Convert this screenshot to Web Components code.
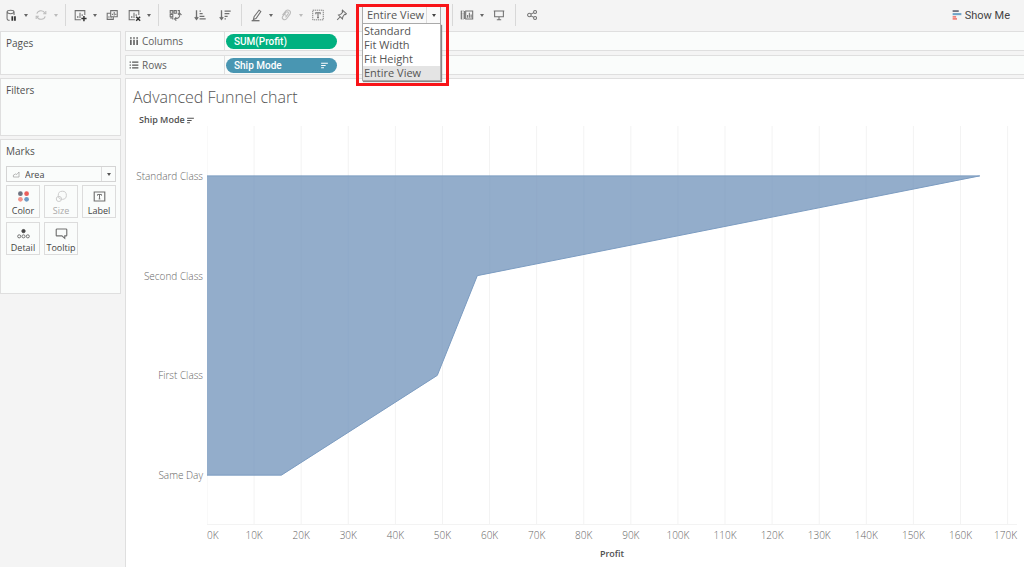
<!DOCTYPE html>
<html lang="en">
<head>
<meta charset="utf-8">
<meta name="viewport" content="width=device-width, initial-scale=1">
<title>Advanced Funnel chart</title>
<style>
  html, body { margin: 0; height: 100%; }
  body { background: #f4f4f4; color: #555; font-family: "Open Sans", "Noto Sans", sans-serif; font-size: 11px; }
</style>
</head>
<body>
<funnel-workbook></funnel-workbook>

<script>
const ICONS = {
  data: '<path d="M6.5 14H5Q3.5 13.500 3.500 12V4.500Q3.500 2.500 7.500 2.500T11.500 4.500V8M3.500 4.500Q4 6.500 7.500 6.500T11.500 4.500"/><path d="M9.500 9.500v5M12.500 9.500v5" stroke="#333" stroke-width="2"/>',
  refresh: '<path d="M3.200 6.500A5 5 0 0 1 12.500 6M12.800 9.500A5 5 0 0 1 3.500 10"/><path d="M10.500 6.500h3V3.500M5.500 9.500h-3v3"/>',
  sheet: '<path d="M13.500 8V3H2.500v10.500H9M5.500 11.500V9M8 11.500V5.500M10.500 9V7"/><path d="M12.500 9v6M9.500 12h6" stroke="#333" stroke-width="1.700"/>',
  duplicate: '<path d="M6.500 3h7.500v7H6.500zM6 6H2.500v7h7v-2.500M8.500 8V6.500M10.500 8.500V4.500M12.300 8V6.500M4.500 11V9.500M6.500 11.200h1"/>',
  clear: '<path d="M13.500 8V3H2.500v10.500H9M5.500 11.500V9M8 11.500V5.500M10.500 9V7"/><path d="M10.500 10l4.500 4.500M15 10l-4.500 4.500" stroke="#333" stroke-width="1.700"/>',
  swap: '<path d="M2.500 3h3v3h-3zM7 3h2.500v3H7zM11 3h2v3h-2M2.500 7.500h3V10h-3zM2.500 11.500h3v1.500M13.500 6.500Q14 12.500 7.500 12.500M11.500 8l2-2 2 2M9.500 10.500l-2 2 2 2"/>',
  ascending: '<path d="M4 2.500V13M2 10.500l2 2.500 2-2.500M7.500 3.500H9M7.500 6.500H11M7.500 9.500H13M7.500 12.500H14.500" stroke-width="1.500"/>',
  descending: '<path d="M4 2.500V13M2 10.500l2 2.500 2-2.500M7.500 3.500H14.500M7.500 6.500H13M7.500 9.500H11M7.500 12.500H9" stroke-width="1.500"/>',
  highlight: '<path d="M11.500 2.500l2 1.500-5.500 8-3 1.200.8-3.200z"/><path d="M3 14.500h9" stroke-width="1.500"/>',
  clip: '<path d="M4 8l4-5q2-1.500 4 0t.5 4l-4 5.500q-1.800 1.800-3.700.4T4.300 9.500L8 4.800q1.200-1 2.200-.2t.3 2L7.500 10.700M6 7l2 1.500"/>',
  text: '<path d="M2 2.500h12v11h-12z" stroke-dasharray="1.500 .8" stroke-width="1"/><path d="M5.500 7V5.500h5V7M8 5.500V11M7 11h2"/>',
  pin: '<path d="M8.500 2.500l4.500 4-1 1-1-.3L9 10l-.5 2.500L4 8l2.500-.7 2.300-2.500-.6-1.300zM6 10l-3.500 3.500"/>',
  cards: '<path d="M6.500 3.500h8v9h-8zM8.700 11V8M10.700 11V5.500M12.700 11V7.500"/><path d="M1 3.500h4M1 6h4M1 8h4M1 10.200h4M1 12.500h4" stroke-dasharray="1 1"/><path d="M1.500 3.500v9M5 3.500v9"/>',
  present: '<path d="M2 3.500h12M3 3.500v6.500h10V3.500M8 10v3M5.500 13.500h5"/>',
  share: '<circle cx="5" cy="8" r="2"/><circle cx="11.500" cy="4.500" r="1.700"/><circle cx="11.500" cy="11.500" r="1.700"/><path d="M6.800 7L10 5.300M6.800 9L10 10.700"/>',
  showme: '<path d="M3 3.500h7" stroke="#6b6b78" stroke-width="2"/><path d="M3 7h10" stroke="#6fa3c7" stroke-width="2.400"/><path d="M3 10h4M3 12.500h5" stroke="#f0837c" stroke-width="2"/>',
  columns: '<path d="M3 2v2.500M8 2v2.500M13 2v2.500M3 6v8.500M8 6v8.500M13 6v8.500" stroke="#555" stroke-width="2.400"/>',
  rows: '<path d="M1 3.500h2M5 3.500h10M1 8h2M5 8h10M1 12.500h2M5 12.500h10" stroke="#555" stroke-width="2"/>',
  sort: '<path d="M2 4h12M2 8h8M2 12h5" stroke="currentColor" stroke-width="2"/>',
  area: '<path d="M2.500 12.500V9l4-2 2 1 4-4.500v9z"/>',
  color: '<g stroke="none"><circle cx="4.200" cy="4.500" r="2.900" fill="#6d7280"/><circle cx="11.800" cy="4.500" r="2.900" fill="#ea5f5c"/><circle cx="4.200" cy="11.500" r="2.900" fill="#f3938a"/><circle cx="11.800" cy="11.500" r="2.900" fill="#6f9bc4"/></g>',
  size: '<circle cx="9" cy="6.500" r="5"/><circle cx="4.800" cy="11" r="3.200"/>',
  label: '<path d="M1.500 2.500h13v11h-13z" stroke-width="1.400"/><path d="M5.500 7V5.500h5V7M8 5.500V11M7 11h2"/>',
  detail: '<circle cx="8" cy="5" r="2" fill="#444" stroke="#444"/><circle cx="2.700" cy="11.500" r="1.900"/><circle cx="8" cy="11.500" r="1.900"/><circle cx="13.300" cy="11.500" r="1.900"/>',
  tooltip: '<path d="M2.500 2.500h11q1 0 1 1v6.500q0 1-1 1H12v3l-3.500-3h-6q-1 0-1-1V3.500q0-1 1-1z" stroke-width="1.400"/>'
};

class Base extends HTMLElement {
  connectedCallback() {
    if (this.shadowRoot) return;
    this.attachShadow({ mode: "open" }).innerHTML =
      "<style>*{box-sizing:border-box}" + this.css() + "</style>" + this.html();
  }
}

customElements.define("ui-icon", class extends Base {
  css() { return `:host{display:block;flex:none;width:var(--icon,14px);height:var(--icon,14px)}
    svg{display:block;width:100%;height:100%;fill:none;stroke:var(--ink,#707070);stroke-width:1.200}`; }
  html() { return `<svg viewBox="0 0 16 16" aria-hidden="true">${ICONS[this.getAttribute("name")]}</svg>`; }
});

customElements.define("tool-button", class extends Base {
  css() { return `:host{display:flex;align-items:center}
    :host([faded]){--ink:#bbb}
    button{border:0;background:none;padding:0;height:24px;display:flex;align-items:center;justify-content:center}
    .main{width:24px}
    :host([menu]) .main{width:20px}
    .more{width:10px}
    .more::before{content:"";border:2px solid transparent;border-top:3px solid var(--ink,#666);border-bottom:0}`; }
  html() {
    const label = this.getAttribute("label");
    return `<button class="main" type="button" aria-label="${label}"><ui-icon name="${this.getAttribute("icon")}"></ui-icon></button>` +
      (this.hasAttribute("menu") ? `<button class="more" type="button" aria-label="${label} options"></button>` : "");
  }
});

customElements.define("fit-picker", class extends Base {
  css() { return `:host{display:block;position:relative;margin-left:8px;width:79px;font-size:11px;color:#555}
    .field{position:relative;display:block}
    select{appearance:none;display:block;width:100%;height:18px;border:1px solid #aaa;background:#fafafa;font:inherit;color:inherit;padding:0 0 1px 4px;border-radius:0}
    .field::before{content:"";position:absolute;right:14px;top:1px;bottom:1px;border-left:1px solid #ddd}
    .field::after{content:"";position:absolute;right:5px;top:8px;border:2px solid transparent;border-top:3px solid #444;border-bottom:0}
    ul{position:absolute;z-index:2;top:18px;left:0;width:100%;margin:0;padding:0;list-style:none;background:#fff;border:1px solid #aaa;border-top:0;box-shadow:1px 1px 1px #888}
    li{line-height:14px;padding-left:1px}
    li[aria-selected=true]{background:#e4e4e4}
    .frame{position:absolute;z-index:3;left:-6px;top:-2px;width:93px;height:82px;border:3px solid #f81418;pointer-events:none}`; }
  html() {
    const items = ["Standard", "Fit Width", "Fit Height", "Entire View"];
    return `<label class="field"><select aria-label="Fit">${items.map(t => `<option${t === "Entire View" ? " selected" : ""}>${t}</option>`).join("")}</select></label>
      <ul role="listbox" aria-label="Fit">${items.map(t => `<li role="option" aria-selected="${t === "Entire View"}">${t}</li>`).join("")}</ul>
      <div class="frame"></div>`;
  }
});

customElements.define("app-toolbar", class extends Base {
  css() { return `:host{display:flex;align-items:center;height:30px;padding-left:1px}
    .group{display:flex}
    .sorts{gap:1px}
    hr{width:1px;height:22px;border:0;margin:0 4px;background:#d8d8d8}
    .after{margin-left:11px}
    .show{margin-left:auto;margin-right:14px;border:0;padding:0;background:none;display:flex;align-items:center;font:11px Roboto,sans-serif;color:#444;gap:1px}`; }
  html() { return `
    <div class="group"><tool-button icon="data" label="Pause updates" menu></tool-button><tool-button icon="refresh" label="Run update" menu faded></tool-button></div>
    <hr><div class="group"><tool-button icon="sheet" label="New worksheet" menu></tool-button><tool-button icon="duplicate" label="Duplicate"></tool-button><tool-button icon="clear" label="Clear sheet" menu></tool-button></div>
    <hr><div class="group sorts"><tool-button icon="swap" label="Swap rows and columns"></tool-button><tool-button icon="ascending" label="Sort ascending"></tool-button><tool-button icon="descending" label="Sort descending"></tool-button></div>
    <hr><div class="group"><tool-button icon="highlight" label="Highlight" menu></tool-button><tool-button icon="clip" label="Group members" menu faded></tool-button><tool-button icon="text" label="Show mark labels"></tool-button><tool-button icon="pin" label="Fix axes"></tool-button></div>
    <fit-picker></fit-picker>
    <hr class="after"><div class="group"><tool-button icon="cards" label="Show or hide cards" menu></tool-button><tool-button icon="present" label="Presentation mode"></tool-button></div>
    <hr><tool-button icon="share" label="Share"></tool-button>
    <button class="show" type="button"><ui-icon name="showme"></ui-icon>Show Me</button>`; }
});

customElements.define("side-card", class extends Base {
  css() { return `:host{display:block;background:#fafcfb;border:1px solid #dfdfdf;padding:4px 4px 0 5px}
    h2{margin:0;font-size:10px;line-height:14px;font-weight:400;color:#505050}`; }
  html() { return `<h2>${this.getAttribute("heading")}</h2><slot></slot>`; }
});

customElements.define("mark-button", class extends Base {
  css() { return `:host{display:block;--icon:13px}
    :host([faded]){--ink:#ccc}
    button{width:100%;height:33px;border:1px solid #dcdcdc;background:#fafcfb;padding:4px 0 0;display:flex;flex-direction:column;align-items:center;gap:1px;font:9px/13px "Open Sans",sans-serif;color:#444}
    :host([faded]) button{color:#aaa}`; }
  html() { return `<button type="button"><ui-icon name="${this.getAttribute("icon")}"></ui-icon><slot></slot></button>`; }
});

customElements.define("marks-panel", class extends Base {
  css() { return `:host{display:block;padding-top:8px}
    .type{position:relative;display:block;--icon:9px;--ink:#999}
    .type ui-icon{position:absolute;left:6px;top:4px}
    select{appearance:none;display:block;width:100%;height:16px;border:1px solid #d4d4d4;border-radius:0;background:#fafcfb;padding:0 0 0 18px;font:9px "Open Sans",sans-serif;color:#444}
    .type::before{content:"";position:absolute;right:14px;top:1px;bottom:1px;border-left:1px solid #ddd}
    .type::after{content:"";position:absolute;right:5px;top:7px;border:2px solid transparent;border-top:3px solid #555;border-bottom:0}
    .grid{display:grid;grid-template-columns:1fr 1fr 1fr;gap:4px;margin-top:3px}`; }
  html() { return `<label class="type"><select aria-label="Mark type"><option>Area</option></select><ui-icon name="area"></ui-icon></label>
    <div class="grid"><mark-button icon="color">Color</mark-button><mark-button icon="size" faded>Size</mark-button><mark-button icon="label">Label</mark-button><mark-button icon="detail">Detail</mark-button><mark-button icon="tooltip">Tooltip</mark-button></div>`; }
});

customElements.define("field-shelf", class extends Base {
  css() { return `:host{display:flex;height:20px;background:#fafcfb;border:1px solid #dfdfdf;border-right:0;font-size:10px;color:#606060;--icon:10px}
    .name{width:99px;flex:none;display:flex;align-items:center;gap:3px;padding-left:3px;border-right:1px solid #dfdfdf}
    .drop{display:flex;align-items:center;padding-left:1px}`; }
  html() { return `<div class="name"><ui-icon name="${this.getAttribute("icon")}"></ui-icon>${this.getAttribute("label")}</div><div class="drop"><slot></slot></div>`; }
});

customElements.define("field-pill", class extends Base {
  css() { return `:host{display:block;--ink:#fff;--icon:9px}
    button{width:111px;height:15px;border:0;border-radius:8px;background:#4996b2;color:#fff;padding:0 8px;display:flex;align-items:center;justify-content:space-between;font:500 10px Roboto,sans-serif}
    :host([measure]) button{background:#00b180}`; }
  html() { return `<button type="button"><slot></slot>${this.hasAttribute("sorted") ? '<ui-icon name="sort"></ui-icon>' : ""}</button>`; }
});

customElements.define("area-chart", class extends Base {
  css() { return `:host{flex:1;display:flex;flex-direction:column;min-height:0;background:#fff;border:1px solid #dfdfdf;border-right:0;border-bottom:0;padding:7px 7px 0 0}
    h1{margin:0 0 0 7px;font-size:16px;line-height:22px;font-weight:300;color:#555}
    .by{display:flex;align-items:center;gap:1px;margin:6px 0 0 13px;font-size:9px;line-height:12px;font-weight:600;color:#505050;--icon:9px}
    .plot{flex:1;min-height:160px;display:grid;grid-template-columns:77px minmax(0,1fr);column-gap:4px}
    .cats{display:grid;grid-template-rows:repeat(4,1fr);align-items:center;justify-items:end;font-size:10px;line-height:12px;font-weight:300;color:#666;white-space:nowrap}
    .canvas{min-height:0;height:100%;position:relative}
    svg{position:absolute;inset:0;width:100%;height:100%;display:block}
    svg *{vector-effect:non-scaling-stroke}
    .ticks{display:grid;grid-template-columns:minmax(0,5fr) repeat(16,minmax(0,10fr)) minmax(0,7fr);margin:4px 0 0 81px;font-size:10px;line-height:13px;font-weight:300;color:#666}
    .ticks span{display:flex;justify-content:center}
    .ticks span:first-child{justify-content:flex-start}
    .ticks span:last-child{justify-content:flex-end}
    .axis{margin:5px 0 7px 81px;text-align:center;font-size:9px;line-height:13px;font-weight:600;color:#505050}`; }
  html() {
    const data = [["Standard Class", 164.1], ["Second Class", 57.4], ["First Class", 48.9], ["Same Day", 15.8]];
    const ticks = Array.from({ length: 18 }, (_, i) => i * 10);
    const points = data.map(([, v], i) => `${v},${50 + i * 100}`).join(" ");
    return `<h1>Advanced Funnel chart</h1>
      <div class="by">Ship Mode<ui-icon name="sort"></ui-icon></div>
      <div class="plot"><div class="cats">${data.map(([n]) => `<span>${n}</span>`).join("")}</div>
        <div class="canvas"><svg viewBox="0 0 172 400" preserveAspectRatio="none" role="img" aria-label="Profit by ship mode">
          <g stroke="#f3f3f3" fill="none">${ticks.map(t => `<path d="M${t} 0V400"/>`).join("")}<path d="M0 400H172" stroke-width="2"/></g>
          <polygon points="0,50 ${points} 0,350" fill="#93adcb"/>
          <polyline points="0,50 ${points} 0,350" fill="none" stroke="#7c9cc1"/>
          <g stroke="#8ba6c5" stroke-opacity=".35">${ticks.slice(1, 16).map(t => {
            const y = t <= 15.8 ? 350 : t <= 48.9 ? 350 - (t - 15.8) / 33.1 * 100 : t <= 57.4 ? 250 - (t - 48.9) / 8.5 * 100 : 150 - (t - 57.4) / 106.7 * 100;
            return `<path d="M${t} 50V${y}"/>`;
          }).join("")}</g>
        </svg></div></div>
      <div class="ticks">${ticks.map(t => `<span>${t}K</span>`).join("")}</div>
      <div class="axis">Profit</div>`;
  }
});

customElements.define("funnel-workbook", class extends Base {
  css() { return `:host{display:flex;flex-direction:column;min-height:100vh}
    main{flex:1;display:grid;grid-template-columns:121px minmax(0,1fr);column-gap:4px;padding-top:1px}
    aside{display:flex;flex-direction:column;gap:3px}
    .pages{height:44px}.filters{height:58px}.marks{min-height:155px}
    section{display:flex;flex-direction:column;gap:3px;min-width:0}
    .shelves{display:flex;flex-direction:column;gap:4px}`; }
  html() { return `<app-toolbar></app-toolbar>
    <main>
      <aside><side-card class="pages" heading="Pages"></side-card><side-card class="filters" heading="Filters"></side-card><side-card class="marks" heading="Marks"><marks-panel></marks-panel></side-card></aside>
      <section>
        <div class="shelves"><field-shelf icon="columns" label="Columns"><field-pill measure>SUM(Profit)</field-pill></field-shelf>
        <field-shelf icon="rows" label="Rows"><field-pill sorted>Ship Mode</field-pill></field-shelf></div>
        <area-chart></area-chart>
      </section>
    </main>`; }
});
</script>
</body>
</html>
